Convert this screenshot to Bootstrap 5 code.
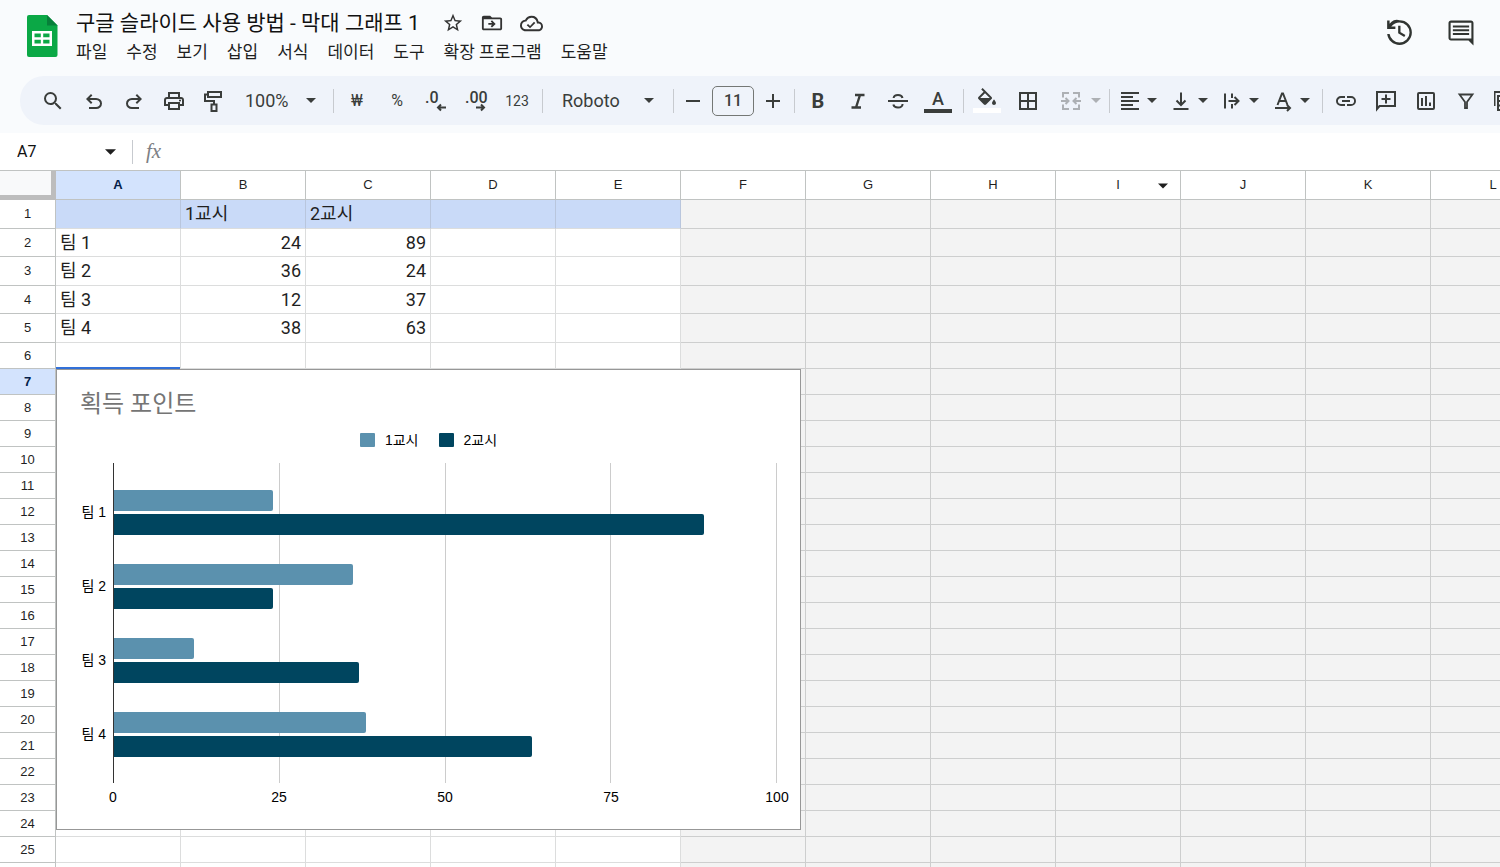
<!DOCTYPE html>
<html lang="ko">
<head>
<meta charset="utf-8">
<meta name="viewport" content="width=device-width, initial-scale=1">
<title>구글 슬라이드 사용 방법 - 막대 그래프 1</title>
<link href="https://cdn.jsdelivr.net/npm/bootstrap@5.3.0/dist/css/bootstrap.min.css" rel="stylesheet">
<style>
  body { font-family: Roboto, "Noto Sans CJK KR", sans-serif; color: #1f1f1f; background: #fff; }
  svg { display: block; flex: none; fill: currentColor; }
  .ln { fill: none; stroke: currentColor; stroke-width: 2; }
  button { border: 0; background: none; padding: 0; color: inherit; }

  .app-top { background: #f9fbfd; }
  .app-head { height: 76px; padding: 10px 24px 0 24px; }
  .doc-name { font-size: 21px; line-height: 26px; margin: 0; font-weight: 400; color: #111; }
  .doc-tools { color: #333; gap: 17px; padding-left: 22px; }
  .menu-row { margin-left: -9px; }
  .menu-row a { padding: 0 10px 0 9px; font-size: 17px; line-height: 32px; color: #1f1f1f; text-decoration: none; white-space: nowrap; }
  .head-tools { gap: 30px; padding-top: 6px; color: #303431; }

  .tools { height: 49px; margin-left: 20px; padding-left: 13px; background: #eff3fa; border-radius: 24px 0 0 24px; color: #3a3d3b; overflow: hidden; }
  .tool { width: 40px; height: 36px; flex: none; font-size: 16px; }
  .tool-step { width: 32px; }
  .tool-split { width: 51px; height: 36px; padding-left: 5px; gap: 5px; flex: none; }
  .tool-merge { width: 57px; height: 36px; padding-left: 12px; gap: 8px; flex: none; color: #adb0b4; }
  .tool-sep { width: 1px; height: 24px; background: #c7cacf; margin: 0 3px 0 5px; flex: none; }
  .tool-sel { appearance: none; border: 0; border-radius: 0; color: inherit; font-size: 18px; height: 36px; flex: none;
    background: url("data:image/svg+xml,%3Csvg xmlns='http://www.w3.org/2000/svg' viewBox='0 0 10 5'%3E%3Cpath d='M0 0h10L5 5z' fill='%233a3d3b'/%3E%3C/svg%3E") no-repeat right 12px center / 10px 5px; }
  .sel-zoom { width: 95px; padding: 0 0 0 12px; }
  .sel-font { width: 122px; padding: 0 0 0 16px; background-position: right 14px center; }
  .size-box { width: 42px; height: 30px; margin: 0 3px; border: 1px solid #747775; border-radius: 5px; background: transparent; text-align: center; font-size: 16px; font-weight: 500; color: inherit; padding: 0; flex: none; }
  .ink { font-size: 18px; line-height: 20px; font-weight: 500; }
  .ink-bar { width: 28px; height: 4px; background: #3a3d3b; }
  .fill-bar { width: 28px; height: 5px; background: #fff; margin-top: 3px; }

  .fx-row { height: 37px; background: #fff; }
  .fx-row input { border: 0; outline: 0; padding: 0; font-size: 16px; background: transparent; }
  .cell-name { width: 84px; margin-left: 17px; color: #111; }
  .fx-sign { font: italic 21px "Liberation Serif", serif; color: #7d8084; margin: 0 12px 0 10px; }

  .sheet { overflow: hidden; min-height: 0; }
  .grid { table-layout: fixed; width: 1556px; border-collapse: separate; border-spacing: 0; border-top: 1px solid #c0c3c2; line-height: 24px; }
  .grid .c-num { width: 56px; }
  .grid .c-col { width: 125px; }
  .grid th { font: 400 13px/20px "Liberation Sans", sans-serif; text-align: center; padding: 0; border-right: 1px solid #c0c3c2; border-bottom: 1px solid #c0c3c2; background: #fff; position: relative; }
  .grid thead th { height: 29px; }
  .grid thead .corner { background: #f8f9fa; border-right: 5px solid #bdbdbd; border-bottom: 5px solid #bdbdbd; }
  .grid th.picked { background: #d3e3fd; font-weight: 700; color: #041e49; }
  .grid td { padding: 0 4px; height: 26px; font-size: 18px; border-right: 1px solid #dcdddd; border-bottom: 1px solid #dcdddd; white-space: nowrap; }
  .grid tr.tall:nth-child(odd) > * { height: 29px; }
  .grid tr.tall:nth-child(even) > * { height: 28px; }
  .grid td.off { background: #f3f3f3; border-color: #cdcece; }
  .grid td.band { background: #c9daf8; border-right-color: #b9c6dd; }
  .grid td.held { position: relative; }
  .col-caret { position: absolute; right: 12px; top: 12px; }
  .held-line { position: absolute; left: 0; right: 0; top: -2px; height: 2px; background: #3270d8; z-index: 3; }

  .plot-card { position: absolute; left: 0; top: 0; z-index: 2; width: 745px; height: 461px; margin: 0; background: #fff; border: 1px solid #979797; padding: 17px 23px 0 23px; font: 14px/20px "Liberation Sans", "Noto Sans CJK KR", sans-serif; color: #000; }
  .plot-card h2 { font: 400 24px/34px Roboto, "Noto Sans CJK KR", sans-serif; color: #757575; margin: 0; }
  .plot-key { gap: 20px; padding-top: 9px; }
  .plot-key span { gap: 10px; }
  .swatch { width: 15px; height: 14px; border-radius: 1px; }
  .one { background: #5b91ae; }
  .two { background: #00455f; }
  .plot-body { height: 320px; margin-top: 13px; }
  .plot-names { width: 33px; padding: 12px 7px 12px 0; white-space: nowrap; }
  .plot-area { border-left: 1px solid #333; padding: 12px 0; }
  .plot-lines > i { flex: 1 1 0; border-right: 1px solid #ccc; }
  .pair { gap: 3px; }
  .plot-bar { height: 21px; border-radius: 0 2px 2px 0; }
  .plot-ticks { margin: 4px -20px 0 13px; }
  .plot-ticks span { width: 40px; text-align: center; }
</style>
</head>
<body class="vh-100 d-flex flex-column overflow-hidden">

<div class="app-top flex-shrink-0 pb-2">
  <header class="app-head d-flex align-items-start">
    <svg class="me-3 mt-1" width="36" height="44" viewBox="0 0 36 44" aria-hidden="true">
      <path d="M5 1h18l10.500 10.500V41a2 2 0 0 1-2 2H5a2 2 0 0 1-2-2V3a2 2 0 0 1 2-2z" fill="#0ba846"/>
      <path d="M23 1l10.500 10.500H23z" fill="#07803a"/>
      <path fill-rule="evenodd" fill="#fff" d="M8 17h20v15H8zM10.500 19.500v3.700h6.300v-3.700zM19.200 19.500v3.700h6.300v-3.700zM10.500 25.700v3.700h6.300v-3.700zM19.200 25.700v3.700h6.300v-3.700z"/>
    </svg>
    <div>
      <div class="d-flex align-items-center">
        <h1 class="doc-name text-nowrap">구글 슬라이드 사용 방법 - 막대 그래프 1</h1>
        <div class="doc-tools d-flex align-items-center">
          <button type="button" aria-label="별표"><svg width="22" height="22" viewBox="0 0 24 24"><path d="m22 9.240-7.190-.62L12 2 9.190 8.630 2 9.240l5.460 4.730L5.820 21 12 17.270 18.180 21l-1.630-7.030L22 9.240zM12 15.400l-3.760 2.270 1-4.280-3.320-2.880 4.380-.38L12 6.100l1.710 4.040 4.380.38-3.320 2.880 1 4.280L12 15.400z"/></svg></button>
          <button type="button" aria-label="이동"><svg width="22" height="22" viewBox="0 0 24 24"><path d="M20 6h-8l-2-2H3c-1.100 0-2 .9-2 2v12c0 1.100.9 2 2 2h18c1.100 0 2-.9 2-2V8c0-1.100-.9-2-2-2zm1 12H3V7.800h18V18z"/><path d="M12.160 12H8v2h4.160l-1.590 1.590L11.990 17 16 13.010 11.990 9l-1.410 1.410z"/></svg></button>
          <button type="button" aria-label="저장됨"><svg width="23" height="23" viewBox="0 0 24 24"><path d="M19.350 10.040A7.490 7.490 0 0 0 12 4C9.110 4 6.600 5.640 5.350 8.040A5.994 5.994 0 0 0 0 14c0 3.310 2.690 6 6 6h13c2.760 0 5-2.240 5-5 0-2.640-2.050-4.780-4.650-4.960zM19 18H6c-2.210 0-4-1.790-4-4 0-2.050 1.530-3.760 3.560-3.970l1.070-.11.5-.95A5.469 5.469 0 0 1 12 6c2.620 0 4.880 1.860 5.390 4.430l.3 1.500 1.530.11A2.980 2.980 0 0 1 22 15c0 1.650-1.350 3-3 3zm-8.500-3.500l-2.090-2.090L7 13.820l3.500 3.180 5.500-5.500-1.410-1.410z"/></svg></button>
        </div>
      </div>
      <nav class="menu-row d-flex" aria-label="메뉴">
        <a href="#">파일</a><a href="#">수정</a><a href="#">보기</a><a href="#">삽입</a><a href="#">서식</a><a href="#">데이터</a><a href="#">도구</a><a href="#">확장 프로그램</a><a href="#">도움말</a>
      </nav>
    </div>
    <div class="head-tools d-flex ms-auto">
      <button type="button" aria-label="버전 기록"><svg width="33" height="33" viewBox="0 -960 960 960"><path d="M480-120q-138 0-240.500-91.500T122-440h70q14 104 98.500 176T480-188q122 0 207-85t85-207q0-122-85-207t-207-85q-69 0-129 32T240-652h120v72H120v-250h72v94q51-64 124.500-99T480-840q75 0 140.500 28.500t114 77q48.500 48.500 77 114T840-480q0 75-28.500 140.500t-77 114q-48.500 48.500-114 77T480-120Z"/><path d="M475-680v205l160 95" fill="none" stroke="currentColor" stroke-width="68"/></svg></button>
      <button type="button" aria-label="댓글"><svg width="30" height="30" viewBox="0 0 24 24"><path d="M21.990 4c0-1.100-.89-2-1.990-2H4c-1.100 0-2 .9-2 2v12c0 1.100.9 2 2 2h14l4 4-.01-18zM20.300 3.700v12.600H3.700V3.700h16.600zM5.500 12h13v1.600h-13zm0-3h13v1.600h-13zm0-3h13v1.600h-13z"/></svg></button>
    </div>
  </header>

  <div class="tools d-flex align-items-center" role="toolbar" aria-label="도구 모음">
    <button type="button" class="tool d-flex align-items-center justify-content-center" aria-label="검색"><svg width="24" height="24" viewBox="0 0 24 24"><path d="M15.500 14h-.79l-.28-.27A6.471 6.471 0 0 0 16 9.500 6.500 6.500 0 1 0 9.500 16c1.610 0 3.090-.59 4.230-1.570l.27.28v.79l5 4.990L20.490 19l-4.990-5zm-6 0C7.010 14 5 11.990 5 9.500S7.010 5 9.500 5 14 7.010 14 9.500 11.990 14 9.500 14z"/></svg></button>
    <button type="button" class="tool d-flex align-items-center justify-content-center" aria-label="실행취소"><svg width="24" height="24" viewBox="-40 -1000 960 960"><path d="M280-200v-80h284q63 0 109.500-40T720-420q0-60-46.500-100T564-560H312l104 104-56 56-200-200 200-200 56 56-104 104h252q97 0 166.500 63T800-420q0 94-69.500 157T564-200H280Z"/></svg></button>
    <button type="button" class="tool d-flex align-items-center justify-content-center" aria-label="다시 실행"><svg width="24" height="24" viewBox="-40 -1000 960 960"><path d="M396-200q-97 0-166.500-63T160-420q0-94 69.500-157T396-640h252L544-744l56-56 200 200-200 200-56-56 104-104H396q-63 0-109.500 40T240-420q0 60 46.500 100T396-280h284v80H396Z"/></svg></button>
    <button type="button" class="tool d-flex align-items-center justify-content-center" aria-label="인쇄"><svg width="24" height="24" viewBox="-40 -960 960 960"><path d="M640-640v-120H320v120h-80v-200h480v200h-80Zm80 180q17 0 28.500-11.500T760-500q0-17-11.500-28.500T720-540q-17 0-28.500 11.500T680-500q0 17 11.500 28.500T720-460Zm-80 260v-160H320v160h320Zm80 80H240v-160H80v-240q0-51 35-85.500t85-34.500h560q51 0 85.500 34.500T880-520v240H720v160Zm80-240v-160q0-17-11.500-28.500T760-560H200q-17 0-28.500 11.500T160-520v160h80v-80h480v80h80Z"/></svg></button>
    <button type="button" class="tool d-flex align-items-center justify-content-center" aria-label="서식 복사"><svg class="ln" width="24" height="24" viewBox="0 0 24 24"><path d="M7 3h13v5H7zM7 5.500H4V12h9v3M10.500 15.500h5V22h-5z"/></svg></button>
    <select class="tool-sel sel-zoom" aria-label="확대/축소"><option>100%</option></select>
    <span class="tool-sep"></span>
    <button type="button" class="tool">₩</button>
    <button type="button" class="tool">%</button>
    <button type="button" class="tool d-flex align-items-center justify-content-center" aria-label="소수점 이하 자릿수 감소"><svg width="24" height="24" viewBox="0 0 24 24"><text x="0" y="14" font-size="16" font-weight="500">.0</text><path class="ln" stroke-width="1.500" d="M21 18.500h-8M16 15.500l-3 3 3 3"/></svg></button>
    <button type="button" class="tool d-flex align-items-center justify-content-center" aria-label="소수점 이하 자릿수 증가"><svg width="24" height="24" viewBox="0 0 24 24"><text x="0" y="14" font-size="16" font-weight="500">.00</text><path class="ln" stroke-width="1.500" d="M11 18.500h8M16 15.500l3 3-3 3"/></svg></button>
    <button type="button" class="tool"><small>123</small></button>
    <span class="tool-sep"></span>
    <select class="tool-sel sel-font" aria-label="글꼴"><option>Roboto</option></select>
    <span class="tool-sep"></span>
    <button type="button" class="tool tool-step d-flex align-items-center justify-content-center" aria-label="글꼴 크기 줄이기"><svg class="ln" width="14" height="14" viewBox="0 0 14 14"><path d="M0 7h14"/></svg></button>
    <input class="size-box" type="text" value="11" aria-label="글꼴 크기">
    <button type="button" class="tool tool-step d-flex align-items-center justify-content-center" aria-label="글꼴 크기 늘리기"><svg class="ln" width="14" height="14" viewBox="0 0 14 14"><path d="M0 7h14M7 0v14"/></svg></button>
    <span class="tool-sep"></span>
    <button type="button" class="tool fs-5 fw-bold lh-1" aria-label="굵게">B</button>
    <button type="button" class="tool d-flex align-items-center justify-content-center" aria-label="기울임꼴"><svg class="ln" width="24" height="24" viewBox="0 0 24 24"><path stroke-width="2.400" d="M9 6h9.500M5.500 18.500H15M14 6l-4 12.500"/></svg></button>
    <button type="button" class="tool d-flex align-items-center justify-content-center" aria-label="취소선"><svg class="ln" width="24" height="24" viewBox="0 0 24 24"><path d="M2 12h20M16.500 9C16 6.800 14.300 6 12 6S7.800 7.200 7.600 9M7.300 15.500c.6 2.200 2.400 3 4.700 3s4.400-1 4.600-3.500"/></svg></button>
    <button type="button" class="tool d-flex flex-column align-items-center justify-content-center" aria-label="텍스트 색상"><span class="ink">A</span><span class="ink-bar"></span></button>
    <span class="tool-sep"></span>
    <button type="button" class="tool d-flex flex-column align-items-center justify-content-center" aria-label="채우기 색상"><svg width="24" height="17" viewBox="0 0 24 17"><path d="M16.560 8.940 7.620 0 6.210 1.410l2.380 2.380-5.150 5.150a1.490 1.490 0 0 0 0 2.120l5.500 5.500c.29.29.68.44 1.060.44s.77-.15 1.060-.44l5.500-5.500c.59-.58.59-1.530 0-2.120zM5.210 10 10 5.210 14.790 10H5.210zM19 11.500s-2 2.170-2 3.500c0 1.100.9 2 2 2s2-.9 2-2c0-1.330-2-3.500-2-3.500z"/></svg><span class="fill-bar"></span></button>
    <button type="button" class="tool d-flex align-items-center justify-content-center" aria-label="테두리"><svg class="ln" width="24" height="24" viewBox="-1 0 24 24"><path d="M4 4h16v16H4zM12 4v16M4 12h16"/></svg></button>
    <button type="button" class="tool-merge d-flex align-items-center" aria-label="셀 병합"><svg class="ln" width="24" height="24" viewBox="0 0 24 24"><path d="M10 4H4v4.500M4 15.500V20h6M14 4h6v4.500M20 15.500V20h-6M2 12h7M6.500 9l3 3-3 3M22 12h-7M17.500 9l-3 3 3 3"/></svg><svg width="10" height="5" viewBox="0 0 10 5"><path d="M0 0h10L5 5z"/></svg></button>
    <span class="tool-sep"></span>
    <button type="button" class="tool-split d-flex align-items-center" aria-label="가로 맞춤"><svg class="ln" width="24" height="24" viewBox="0 0 24 24"><path d="M3 4h18M3 8h12M3 12h18M3 16h12M3 20h18"/></svg><svg width="10" height="5" viewBox="0 0 10 5"><path d="M0 0h10L5 5z"/></svg></button>
    <button type="button" class="tool-split d-flex align-items-center" aria-label="세로 맞춤"><svg class="ln" width="24" height="24" viewBox="0 0 24 24"><path d="M4.500 20h15M12 3.500v12M7.500 11.500L12 16l4.500-4.500"/></svg><svg width="10" height="5" viewBox="0 0 10 5"><path d="M0 0h10L5 5z"/></svg></button>
    <button type="button" class="tool-split d-flex align-items-center" aria-label="텍스트 줄바꿈"><svg class="ln" width="24" height="24" viewBox="0 0 24 24"><path d="M5 4.500v15M12 4.500v4.500M12 15v4.500M8.500 12H18M14.500 8l4 4-4 4"/></svg><svg width="10" height="5" viewBox="0 0 10 5"><path d="M0 0h10L5 5z"/></svg></button>
    <button type="button" class="tool-split d-flex align-items-center" aria-label="텍스트 회전"><svg class="ln" width="24" height="24" viewBox="0 0 24 24"><path d="M6.500 16L11 4.500h1L16.500 16M8 12h7M4 19h15M16 16l3 3-3 3"/></svg><svg width="10" height="5" viewBox="0 0 10 5"><path d="M0 0h10L5 5z"/></svg></button>
    <span class="tool-sep"></span>
    <button type="button" class="tool d-flex align-items-center justify-content-center" aria-label="링크 삽입"><svg width="24" height="24" viewBox="0 0 24 24"><path d="M3.900 12c0-1.710 1.390-3.100 3.100-3.100h4V7H7a5 5 0 0 0 0 10h4v-1.900H7c-1.710 0-3.100-1.390-3.100-3.100zM8 13h8v-2H8v2zm9-6h-4v1.900h4a3.100 3.100 0 0 1 0 6.200h-4V17h4a5 5 0 0 0 0-10z"/></svg></button>
    <button type="button" class="tool d-flex align-items-center justify-content-center" aria-label="댓글 삽입"><svg class="ln" width="24" height="24" viewBox="0 0 24 24"><path d="M3 20V3h18v14H5.500zM12 5.500v9M7.500 10h9"/></svg></button>
    <button type="button" class="tool d-flex align-items-center justify-content-center" aria-label="차트 삽입"><svg class="ln" width="24" height="24" viewBox="0 0 24 24"><rect x="4" y="4" width="16" height="16" rx="1"/><path d="M8 9v8M12 7v10M16 13.500V17"/></svg></button>
    <button type="button" class="tool d-flex align-items-center justify-content-center" aria-label="필터 만들기"><svg class="ln" width="24" height="24" viewBox="0 0 24 24"><path stroke-width="1.800" d="M5.500 5.500h13L13 13v6h-2v-6z"/></svg></button>
    <button type="button" class="tool d-flex align-items-center justify-content-center" aria-label="필터 보기"><svg class="ln" width="24" height="24" viewBox="3 0 24 24"><path d="M7 7h14v14H7zM7 12h14M7 16.500h14M12 12v9M3.500 17V3h14"/></svg></button>
  </div>
</div>

<div class="fx-row d-flex align-items-center flex-shrink-0">
  <input class="cell-name" type="text" value="A7" aria-label="이름 상자">
  <button type="button" class="ms-1" aria-label="이름 상자 메뉴"><svg width="11" height="6" viewBox="0 0 10 5"><path d="M0 0h10L5 5z"/></svg></button>
  <span class="tool-sep ms-3"></span>
  <label class="fx-sign" for="formula">fx</label>
  <input id="formula" class="flex-fill" type="text">
</div>

<main class="sheet flex-fill">
  <table class="grid">
    <colgroup id="cols"></colgroup>
    <thead><tr id="letters"><th class="corner"></th></tr></thead>
    <tbody id="rows"></tbody>
  </table>
</main>

<template id="plot">
  <span class="held-line"></span>
  <figure class="plot-card">
    <h2>획득 포인트</h2>
    <div class="plot-key d-flex justify-content-center">
      <span class="d-flex align-items-center"><i class="swatch one"></i>1교시</span>
      <span class="d-flex align-items-center"><i class="swatch two"></i>2교시</span>
    </div>
    <div class="plot-body d-flex">
      <div class="plot-names d-flex flex-column"></div>
      <div class="plot-area flex-fill d-flex flex-column position-relative">
        <div class="plot-lines d-flex position-absolute top-0 start-0 w-100 h-100"><i></i><i></i><i></i><i></i></div>
      </div>
    </div>
    <div class="plot-ticks d-flex justify-content-between"><span>0</span><span>25</span><span>50</span><span>75</span><span>100</span></div>
  </figure>
</template>

<script src="https://cdn.jsdelivr.net/npm/bootstrap@5.3.0/dist/js/bootstrap.bundle.min.js"></script>
<script>
  const letters = 'ABCDEFGHIJKL'.split('');
  const usedCols = 5, rowCount = 25, heldRow = 7;
  const head = ['', '1교시', '2교시'];
  const teams = [['팀 1', 24, 89], ['팀 2', 36, 24], ['팀 3', 12, 37], ['팀 4', 38, 63]];
  const data = [head, ...teams];

  document.getElementById('cols').innerHTML = '<col class="c-num">' + '<col class="c-col">'.repeat(letters.length);
  document.getElementById('letters').insertAdjacentHTML('beforeend', letters.map(l =>
    `<th scope="col" class="${l === 'A' ? 'picked' : ''}">${l}${l === 'I' ? '<svg class="col-caret" width="10" height="6" viewBox="0 0 10 5"><path d="M0 0h10L5 5z"/></svg>' : ''}</th>`).join(''));

  let html = '';
  for (let r = 1; r <= rowCount + 1; r++) {
    html += `<tr class="${r <= data.length ? 'tall' : ''}"><th scope="row" class="${r === heldRow ? 'picked' : ''}">${r <= rowCount ? r : ''}</th>`;
    letters.forEach((l, c) => {
      const v = (data[r - 1] || [])[c] ?? '';
      const cls = [c >= usedCols ? 'off' : r === 1 ? 'band' : '', typeof v === 'number' ? 'text-end' : '', r === heldRow && c === 0 ? 'held' : ''].join(' ').trim();
      html += `<td class="${cls}">${v}</td>`;
    });
    html += '</tr>';
  }
  document.getElementById('rows').innerHTML = html;

  const held = document.querySelector('.held');
  held.append(document.getElementById('plot').content.cloneNode(true));
  teams.forEach(([name, a, b]) => {
    held.querySelector('.plot-names').insertAdjacentHTML('beforeend',
      `<span class="flex-fill d-flex align-items-center justify-content-end">${name}</span>`);
    held.querySelector('.plot-area').insertAdjacentHTML('beforeend',
      `<div class="pair flex-fill d-flex flex-column justify-content-center position-relative">
         <div class="plot-bar one" style="width:${a}%"></div><div class="plot-bar two" style="width:${b}%"></div></div>`);
  });
</script>
</body>
</html>
